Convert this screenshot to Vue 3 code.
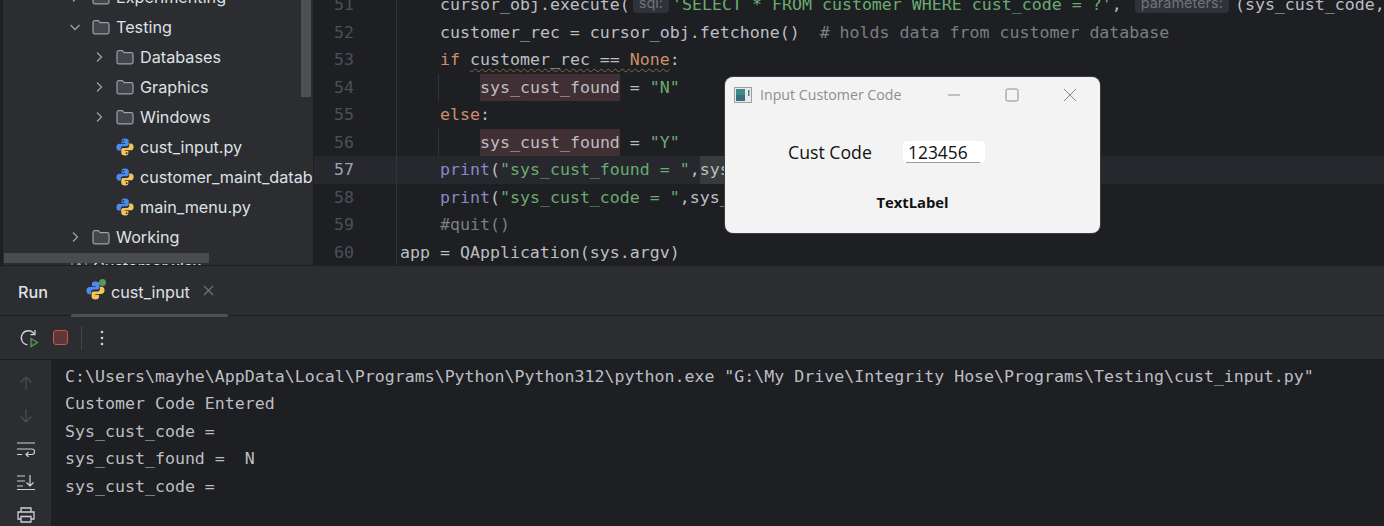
<script setup>
const tree = [
  { name: 'Experimenting', depth: 1, icon: 'folder', arrow: 'right' },
  { name: 'Testing', depth: 1, icon: 'folder', arrow: 'down' },
  { name: 'Databases', depth: 2, icon: 'folder', arrow: 'right' },
  { name: 'Graphics', depth: 2, icon: 'folder', arrow: 'right' },
  { name: 'Windows', depth: 2, icon: 'folder', arrow: 'right' },
  { name: 'cust_input.py', depth: 2, icon: 'py' },
  { name: 'customer_maint_database.py', depth: 2, icon: 'py' },
  { name: 'main_menu.py', depth: 2, icon: 'py' },
  { name: 'Working', depth: 1, icon: 'folder', arrow: 'right' },
  { name: 'Customer.xlsx', depth: 0, icon: 'sheet' },
]

const code = [
  { n: 51, ind: 1, t: [['', 'cursor_obj.execute('], ['hint', 'sql:'], ['str', "'SELECT * FROM customer WHERE cust_code = ?'"], ['', ','], ['hint hint-wide', 'parameters:'], ['', '(sys_cust_code,']] },
  { n: 52, ind: 1, t: [['', 'customer_rec = cursor_obj.fetchone()  '], ['com', '# holds data from customer database']] },
  { n: 53, ind: 1, t: [['kw', 'if '], ['warn', 'customer_rec == '], ['kw warn', 'None'], ['', ':']] },
  { n: 54, ind: 2, guide: true, t: [['mark', 'sys_cust_found'], ['', ' = '], ['str', '"N"']] },
  { n: 55, ind: 1, t: [['kw', 'else'], ['', ':']] },
  { n: 56, ind: 2, guide: true, t: [['mark', 'sys_cust_found'], ['', ' = '], ['str', '"Y"']] },
  { n: 57, ind: 1, cur: true, t: [['fn', 'print'], ['', '('], ['str', '"sys_cust_found = "'], ['', ','], ['read', 'sys_cust_found'], ['', ')']] },
  { n: 58, ind: 1, t: [['fn', 'print'], ['', '('], ['str', '"sys_cust_code = "'], ['', ',sys_cust_code)']] },
  { n: 59, ind: 1, t: [['com', '#quit()']] },
  { n: 60, ind: 0, t: [['', 'app = QApplication(sys.argv)']] },
]

const output = [
  'C:\\Users\\mayhe\\AppData\\Local\\Programs\\Python\\Python312\\python.exe "G:\\My Drive\\Integrity Hose\\Programs\\Testing\\cust_input.py"',
  'Customer Code Entered',
  'Sys_cust_code = ',
  'sys_cust_found =  N',
  'sys_cust_code = ',
]

const blue = 'M8 1.2C5.6 1.2 5.3 2.3 5.3 3.2V4.8H8.2V5.4H3.4C2 5.4 1.1 6.5 1.1 8.1C1.1 9.7 2 10.8 3.3 10.8H4.6V9.2C4.6 8.1 5.4 7.3 6.5 7.3H9.4C10.3 7.3 11 6.6 11 5.7V3.2C11 2 10 1.2 8 1.2Z'
const yellow = 'M8 14.8C10.4 14.8 10.7 13.7 10.7 12.8V11.2H7.8V10.6H12.6C14 10.6 14.9 9.5 14.9 7.9C14.9 6.3 14 5.2 12.7 5.2H11.4V6.8C11.4 7.9 10.6 8.7 9.5 8.7H6.6C5.7 8.7 5 9.4 5 10.3V12.8C5 14 6 14.8 8 14.8Z'
</script>

<template>
  <div class="ide">
    <div class="top">
      <aside class="project">
        <div class="tree">
          <div v-for="r in tree" :key="r.name" class="row" :class="'d' + r.depth">
            <svg v-if="r.arrow" class="arrow" width="16" height="16" viewBox="0 0 16 16" fill="none" stroke="#9da0a8" stroke-width="1.3">
              <path v-if="r.arrow === 'right'" d="M6 3.5L10.5 8L6 12.5" />
              <path v-else d="M3.5 6L8 10.5L12.5 6" />
            </svg>
            <span v-else class="arrow"></span>
            <svg v-if="r.icon === 'folder'" class="ic" width="18" height="18" viewBox="0 0 18 18" fill="none">
              <path d="M1 4.5C1 3.4 1.8 2.6 2.8 2.6H6.2L8.2 4.7H15.2C16.2 4.7 17 5.5 17 6.5V14C17 15 16.2 15.8 15.2 15.8H2.8C1.8 15.8 1 15 1 14Z" fill="#43454a" stroke="#9da0a8" stroke-width="1.2" />
            </svg>
            <svg v-else-if="r.icon === 'py'" class="ic py" width="20" height="20" viewBox="0 0 16 16">
              <path :d="blue" fill="#4c8cf0" />
              <path :d="yellow" fill="#f2c55c" />
              <circle cx="6.7" cy="3.1" r=".7" fill="#2b2d30" />
              <circle cx="9.3" cy="12.9" r=".7" fill="#2b2d30" />
            </svg>
            <svg v-else class="ic" width="18" height="18" viewBox="0 0 18 18" fill="none">
              <rect x="2" y="2" width="14" height="14" rx="2" stroke="#9da0a8" stroke-width="1.2" />
              <circle cx="9" cy="7" r="2" fill="#9da0a8" />
            </svg>
            <span class="name">{{ r.name }}</span>
          </div>
        </div>
        <div class="vscroll"></div>
        <div class="hscroll"></div>
      </aside>

      <main class="editor">
        <div class="lines">
          <div v-for="l in code" :key="l.n" class="line" :class="{ cur: l.cur }">
            <span class="num">{{ l.n }}</span>
            <span class="src" :class="'ind' + l.ind">
              <i v-if="l.guide" class="guide"></i>
              <span v-for="(s, i) in l.t" :key="i" :class="s[0]">{{ s[1] }}</span>
            </span>
          </div>
        </div>
      </main>

      <section class="dialog">
        <header class="dlg-title">
          <svg class="dlg-icon" width="18" height="16" viewBox="0 0 18 16">
            <rect x=".5" y=".5" width="17" height="15" fill="#e8eaea" stroke="#9aa0a4" />
            <rect x="2" y="2" width="9" height="12" fill="#3d8a8a" />
            <rect x="2" y="8" width="9" height="6" fill="#3c6e7c" />
            <rect x="14" y="3" width="1.5" height="6" fill="#4a7f90" />
          </svg>
          <span class="dlg-name">Input Customer Code</span>
          <div class="dlg-controls">
            <svg width="14" height="14" viewBox="0 0 14 14"><path d="M1 7H13" stroke="#8a8a8a" stroke-width="1" /></svg>
            <svg width="14" height="14" viewBox="0 0 14 14" fill="none"><rect x="1" y="1" width="12" height="12" rx="1.5" stroke="#8a8a8a" /></svg>
            <svg width="14" height="14" viewBox="0 0 14 14"><path d="M1 1L13 13M13 1L1 13" stroke="#8a8a8a" stroke-width="1" /></svg>
          </div>
        </header>
        <div class="dlg-form">
          <label class="dlg-label">Cust Code</label>
          <div class="dlg-input">123456</div>
        </div>
        <div class="dlg-text">TextLabel</div>
      </section>
    </div>

    <section class="run">
      <div class="run-tabs">
        <span class="run-title">Run</span>
        <div class="tab">
          <span class="tab-ic">
            <svg width="21" height="21" viewBox="0 0 16 16">
              <path :d="blue" fill="#4c8cf0" />
              <path :d="yellow" fill="#f2c55c" />
            </svg>
            <i class="tab-dot"></i>
          </span>
          <span class="tab-name">cust_input</span>
          <svg width="11" height="11" viewBox="0 0 11 11"><path d="M1 1L10 10M10 1L1 10" stroke="#6f737a" stroke-width="1.2" /></svg>
        </div>
      </div>
      <div class="run-tools">
        <svg class="t-rerun" width="20" height="20" viewBox="0 0 20 20" fill="none">
          <path d="M15.5 6.5A7 7 0 1 0 8.5 16.7" stroke="#ced0d6" stroke-width="1.3" />
          <path d="M16 2V6.7H11.3" stroke="#ced0d6" stroke-width="1.3" />
          <path d="M12 10.5L18.5 14.5L12 18.5Z" fill="#2b3d2e" stroke="#57965c" stroke-width="1.3" />
        </svg>
        <span class="t-stop"></span>
        <span class="t-sep"></span>
        <svg width="4" height="16" viewBox="0 0 4 16"><circle cx="2" cy="2" r="1.3" fill="#ced0d6" /><circle cx="2" cy="8" r="1.3" fill="#ced0d6" /><circle cx="2" cy="14" r="1.3" fill="#ced0d6" /></svg>
      </div>
      <div class="run-body">
        <div class="run-side">
          <svg width="16" height="16" viewBox="0 0 16 16" fill="none" stroke="#4b4e54" stroke-width="1.2"><path d="M8 15V2M2.5 7.5L8 2L13.5 7.5" /></svg>
          <svg width="16" height="16" viewBox="0 0 16 16" fill="none" stroke="#4b4e54" stroke-width="1.2"><path d="M8 1V14M2.5 8.5L8 14L13.5 8.5" /></svg>
          <svg width="18" height="16" viewBox="0 0 18 16" fill="none" stroke="#ced0d6" stroke-width="1.2"><path d="M0 2H18M0 8H15C18.5 8 18.5 13.5 15 13.5H9M11.5 11L9 13.5L11.5 16M0 13.5H5" /></svg>
          <svg width="18" height="16" viewBox="0 0 18 16" fill="none" stroke="#ced0d6" stroke-width="1.2"><path d="M0 2H8M0 7H8M0 12H6M13 1V12M9.5 8.5L13 12L16.5 8.5M0 15.5H18" /></svg>
          <svg width="18" height="16" viewBox="0 0 18 16" fill="none" stroke="#ced0d6" stroke-width="1.3"><path d="M4 5V1H14V5M4 12H1V5H17V12H14M4 9.5H14V15H4Z" /></svg>
        </div>
        <div class="console">
          <div v-for="(o, i) in output" :key="i" class="out">{{ o }}</div>
        </div>
      </div>
    </section>
  </div>
</template>

<style>
html, body { margin: 0; background: #1e1f22; overflow: hidden; }
</style>

<style scoped>
.ide {
  position: relative;
  width: 1384px;
  height: 526px;
  display: flex;
  flex-direction: column;
  overflow: hidden;
  background: #1e1f22;
  font-family: Inter, "Noto Sans", sans-serif;
}
.top { position: relative; display: flex; height: 265px; flex: none; }

.project {
  position: relative;
  width: 310px;
  margin-left: 3px;
  flex: none;
  overflow: hidden;
  background: #2b2d30;
  border-right: 1px solid #1e1f22;
}
.tree { margin-top: -18px; }
.row { display: flex; align-items: center; height: 30px; white-space: nowrap; color: #dfe1e5; font-size: 16.2px; }
.d0 { padding-left: 67px; }
.d1 { padding-left: 64px; }
.d2 { padding-left: 88px; }
.arrow { width: 16px; height: 16px; flex: none; margin-right: 9px; }
.d0 .arrow { display: none; }
.ic { flex: none; margin-right: 6px; }
.ic.py { margin-left: -1px; margin-right: 5px; }
.d0 .ic { margin-right: 5px; }
.vscroll { position: absolute; top: 0; left: 298px; width: 10px; height: 97px; background: #4e4f52; }
.hscroll { position: absolute; top: 253px; left: 1px; width: 205px; height: 10px; background: #4a4b4e; }

.editor { flex: 1; min-width: 0; overflow: hidden; font-family: "DejaVu Sans Mono", "Liberation Mono", monospace; font-size: 16.6px; color: #bcbec4; }
.lines { margin-top: -9px; }
.line { display: flex; height: 27.5px; line-height: 27.5px; white-space: pre; }
.line.cur { background: #26282e; }
.num { width: 83px; box-sizing: border-box; padding-left: 20px; flex: none; color: #4b5059; border-right: 1px solid #313438; }
.cur .num { color: #a1a3ab; }
.src { position: relative; display: block; padding-left: 3px; }
.ind1 { padding-left: 43px; }
.ind2 { padding-left: 83px; }
.guide { position: absolute; left: 41px; top: 0; bottom: 0; width: 1px; background: #313438; }
.kw { color: #cf8e6d; }
.str { color: #6aab73; }
.fn { color: #8888c6; }
.com { color: #7a7e85; }
.warn { text-decoration: underline wavy #7d6c3c 1px; text-underline-offset: 3px; }
.mark { display: inline-block; background: #402f33; }
.read { display: inline-block; background: #373b39; }
.hint {
  display: inline-block;
  height: 20px;
  line-height: 20px;
  margin: 0 3px;
  padding: 0 6px;
  border-radius: 4px;
  background: #2f3238;
  color: #6f737a;
  font-family: Inter, sans-serif;
  font-size: 14.5px;
  vertical-align: 2px;
}
.hint-wide { margin: 0 6px 0 13px; }

.dialog {
  position: absolute;
  left: 725px;
  top: 77px;
  width: 375px;
  height: 156px;
  border-radius: 8px;
  background: #f3f3f3;
  color: #111;
  font-family: "Open Sans", "Noto Sans", sans-serif;
  box-shadow: 0 0 0 1px #3a3b3e;
}
.dlg-title { display: flex; align-items: center; height: 36px; padding-left: 9px; }
.dlg-icon { flex: none; margin-right: 8px; }
.dlg-name { font-size: 14.2px; color: #8e8e8e; padding-bottom: 1px; }
.dlg-controls { display: flex; gap: 44px; margin-left: auto; padding-right: 23px; }
.dlg-controls svg:first-child { margin-right: 0; }
.dlg-form { display: flex; align-items: center; padding: 27px 0 0 63px; }
.dlg-label { width: 115px; font-size: 17.7px; }
.dlg-input {
  width: 82px;
  height: 22px;
  box-sizing: border-box;
  padding-left: 5px;
  line-height: 22px;
  font-size: 17.4px;
  background: linear-gradient(#bbb, #777) no-repeat 3px 21px / 74px 1px, #fff;
  border-radius: 4px;
}
.dlg-text { margin-top: 28px; text-align: center; font-size: 14.8px; font-weight: 700; }

.run { flex: 1; display: flex; flex-direction: column; min-height: 0; background: #2b2d30; border-top: 1px solid #1e1f22; }
.run-tabs { display: flex; height: 50px; flex: none; align-items: center; box-sizing: border-box; border-bottom: 1px solid #1e1f22; padding-left: 18px; color: #dfe1e5; font-size: 16.2px; }
.run-title { width: 53px; font-weight: 500; padding-top: 2px; }
.tab { position: relative; display: flex; align-items: center; height: 100%; width: 157px; box-sizing: border-box; padding-left: 14px; }
.tab::after { content: ""; position: absolute; left: 0; right: 0; bottom: -2px; height: 3px; border-radius: 2px; background: #4e5157; }
.tab-ic { position: relative; display: flex; margin-right: 5px; }
.tab-dot { position: absolute; right: 0; top: -1px; width: 7px; height: 7px; border-radius: 50%; background: #57965c; }
.tab-name { margin-right: 13px; padding-top: 2px; }
.run-tools { display: flex; align-items: center; height: 44px; flex: none; box-sizing: border-box; padding-left: 19px; border-bottom: 1px solid #1e1f22; }
.t-rerun { margin-right: 14px; }
.t-stop { width: 15px; height: 15px; box-sizing: border-box; border: 1.5px solid #c75450; border-radius: 3px; background: #5e3838; margin-right: 13px; }
.t-sep { width: 1px; height: 24px; background: #43454a; margin-right: 18px; }
.run-body { flex: 1; display: flex; min-height: 0; }
.run-side { width: 51px; flex: none; box-sizing: border-box; padding-top: 15px; display: flex; flex-direction: column; align-items: center; gap: 17px; }
.console { flex: 1; padding: 2.6px 0 0 14px; background: #1e1f22; color: #bcbec4; font-family: "DejaVu Sans Mono", "Liberation Mono", monospace; font-size: 16.6px; }
.out { height: 27.5px; line-height: 27.5px; white-space: pre; }
</style>
